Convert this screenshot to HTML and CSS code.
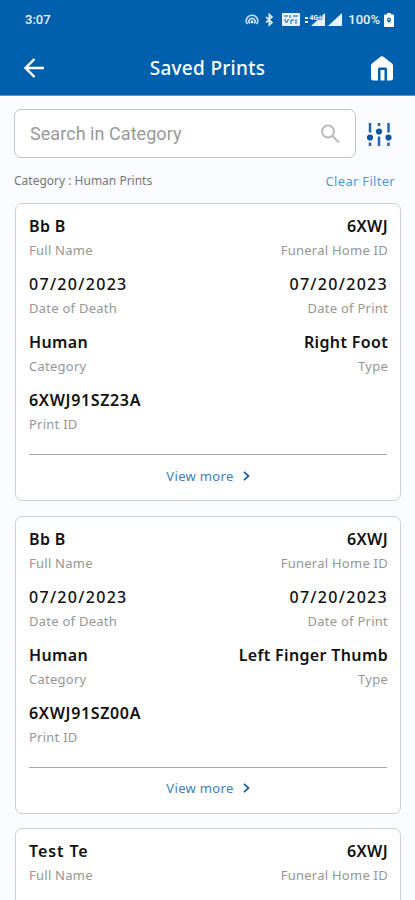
FILE: index.html
```html
<!DOCTYPE html>
<html lang="en">
<head>
    <meta charset="UTF-8">
    <meta name="viewport" content="width=device-width, initial-scale=1.0">
    <link rel="stylesheet" href="styles.css">
    <title>Saved Prints</title>
</head>
<body>

    <header class="header">
        <div class="status-bar">
            <span class="time">3:07</span>
            <svg class="status-icons" width="98" height="16" viewBox="0 0 98 16" fill="#e9f3ff">
                <!-- hotspot -->
                <g fill="none" stroke="#c4dcf5" stroke-width="1.700">
                    <path d="M2.500 12A5.800 5.300 0 1 1 11.500 12"/>
                    <path d="M4.800 11.500A3 3 0 1 1 9.200 11.500"/>
                </g>
                <circle cx="7" cy="10" r="1.400"/>
                <!-- bluetooth -->
                <path d="M21 5L27 10.500L24.300 13V2.500L27 5L21 10.500" fill="none" stroke="#e9f3ff" stroke-width="1.600"/>
                <!-- vpn / volte -->
                <rect x="37" y="1" width="18" height="13" rx="1"/>
                <path d="M39 4H43M45 3V6M48 4H53M39.500 7L41.500 11L43.500 7M46 12V8H49M51 7V12" fill="none" stroke="#0060ad" stroke-width="1"/>
                <!-- signal -->
                <path d="M60 5H63V7H60zM60 9H63V11H60zM66 14L80 1V14z"/>
                <path d="M83 14L97 1V14z"/>
                <text x="64.500" y="7.500" class="network">4G+</text>
            </svg>
            <span class="percent">100%</span>
            <svg class="battery" width="10" height="14" viewBox="0 0 10 14">
                <path d="M3 0H7V1.500H9Q10 1.500 10 2.500V13Q10 14 9 14H1Q0 14 0 13V2.500Q0 1.500 1 1.500H3z" fill="#fff"/>
                <path d="M3 6.500A2 2 0 1 1 7 6.500Q7 8 5 10Q3 8 3 6.500z" fill="#0060ad"/>
                <circle cx="5" cy="6.500" r=".8" fill="#fff"/>
            </svg>
        </div>
        <div class="nav-bar">
            <svg class="back" width="20" height="20" viewBox="0 0 20 20" fill="none" stroke="#fff" stroke-width="2.400">
                <path d="M20 10H2M10.500 1L1.500 10L10.500 19"/>
            </svg>
            <h1>Saved Prints</h1>
            <svg class="home" width="22" height="25" viewBox="0 0 22 25">
                <path d="M9.800.6Q11 0 12.200.6L21 7.500Q22 8.300 22 9.500V22Q22 24.500 19.500 24.500H16V13Q16 11.500 14.500 11.500H8.500Q7 11.500 7 13V24.500H2.500Q0 24.500 0 22V9.500Q0 8.300 1 7.500z" fill="#fff"/>
                <path d="M9.500 14H13.500V24.500H9.500z" fill="#fff"/>
            </svg>
        </div>
    </header>

    <main>
        <div class="search-row">
            <div class="search">
                <span>Search in Category</span>
                <svg width="20" height="20" viewBox="0 0 20 20" fill="none" stroke="#bcbcbc" stroke-width="2">
                    <circle cx="8" cy="7.500" r="6"/>
                    <path d="M12.300 11.800L19 18.500"/>
                </svg>
            </div>
            <svg class="filter" width="26" height="26" viewBox="0 0 26 26" fill="#0b56a5">
                <g fill="none" stroke="#2464ae" stroke-width="2.500">
                    <path d="M4 2V11.500M4 21.500V25M13 2V5M13 15.500V25M22.500 2V11.500M22.500 21.500V25"/>
                </g>
                <circle cx="4" cy="16.500" r="3.100"/>
                <circle cx="13" cy="10.500" r="3.100"/>
                <circle cx="22.500" cy="16.500" r="3.100"/>
            </svg>
        </div>

        <div class="filter-info">
            <span class="current">Category : Human Prints</span>
            <a class="clear">Clear Filter</a>
        </div>

        <div class="card">
            <dl>
                <div><dt>Bb B</dt><dd>Full Name</dd></div>
                <div><dt>6XWJ</dt><dd>Funeral Home ID</dd></div>
                <div><dt class="date">07/20/2023</dt><dd>Date of Death</dd></div>
                <div><dt class="date">07/20/2023</dt><dd>Date of Print</dd></div>
                <div><dt>Human</dt><dd>Category</dd></div>
                <div><dt>Right Foot</dt><dd>Type</dd></div>
                <div><dt class="code">6XWJ91SZ23A</dt><dd>Print ID</dd></div>
            </dl>
            <a class="more">View more
                <svg width="7" height="10" viewBox="0 0 7 10"><path d="M1 .8L5.500 5L1 9.200"/></svg>
            </a>
        </div>

        <div class="card">
            <dl>
                <div><dt>Bb B</dt><dd>Full Name</dd></div>
                <div><dt>6XWJ</dt><dd>Funeral Home ID</dd></div>
                <div><dt class="date">07/20/2023</dt><dd>Date of Death</dd></div>
                <div><dt class="date">07/20/2023</dt><dd>Date of Print</dd></div>
                <div><dt>Human</dt><dd>Category</dd></div>
                <div><dt>Left Finger Thumb</dt><dd>Type</dd></div>
                <div><dt class="code">6XWJ91SZ00A</dt><dd>Print ID</dd></div>
            </dl>
            <a class="more">View more
                <svg width="7" height="10" viewBox="0 0 7 10"><path d="M1 .8L5.500 5L1 9.200"/></svg>
            </a>
        </div>

        <div class="card">
            <dl>
                <div><dt class="wide">Test Te</dt><dd>Full Name</dd></div>
                <div><dt>6XWJ</dt><dd>Funeral Home ID</dd></div>
            </dl>
        </div>
    </main>

</body>
</html>
```
FILE: styles.css
```css
* {
    box-sizing: border-box;
}
body {
    margin: 0;
    height: 900px;
    overflow: hidden;
    background-color: #fafcff;
    font-family: "Noto Sans", sans-serif;
    color: #111;
}
.header {
    height: 96px;
    background-color: #0060ad;
    color: #fff;
    border-bottom: 1px solid #5594c9;
}
.status-bar {
    display: flex;
    align-items: center;
    height: 39px;
    padding: 0 21px 0 25px;
    font-family: Roboto, sans-serif;
    color: #e9f3ff;
}
.time {
    font-size: 13px;
    font-weight: 500;
}
.status-icons {
    margin-left: auto;
}
.network {
    font-size: 7px;
    font-weight: 700;
    stroke: #0060ad;
    stroke-width: 1px;
    paint-order: stroke;
}
.percent {
    margin: 0 4px 0 5px;
    font-size: 13px;
    font-weight: 500;
}
.nav-bar {
    display: flex;
    align-items: center;
    justify-content: space-between;
    height: 58px;
    padding: 0 22px 0 24px;
}
.nav-bar h1 {
    margin: 0;
    font-size: 19px;
    line-height: 26px;
    padding-bottom: 1px;
    font-weight: 500;
    letter-spacing: 0.3px;
}
main {
    height: 804px;
    overflow: hidden;
    padding: 13px 14px 0;
}
.search-row {
    display: flex;
    align-items: center;
    gap: 10px;
}
.search {
    display: flex;
    align-items: center;
    justify-content: space-between;
    width: 342px;
    height: 49px;
    padding: 0 15px;
    border: 1px solid #c2c2c4;
    border-radius: 7px;
    background-color: #fff;
    font-family: Roboto, sans-serif;
    font-size: 18px;
    letter-spacing: 0.05px;
    color: #999;
}
.filter-info {
    display: flex;
    justify-content: space-between;
    align-items: center;
    height: 45px;
    padding: 0 6px 0 0;
}
.current {
    font-size: 12px;
    color: #777;
}
.clear {
    font-size: 13px;
    letter-spacing: 0.3px;
    color: #5a98cb;
}
.card {
    height: 298px;
    margin: 0 0 14.700px 1px;
    width: 386px;
    padding: 11px 13px 0;
    border: 1px solid #cfcfd2;
    border-radius: 7px;
    background-color: #fff;
}
dl {
    display: grid;
    grid-template-columns: auto auto;
    row-gap: 11px;
    margin: 0;
}
dl div:nth-child(even) {
    margin-right: -1px;
    text-align: right;
}
dt {
    font-size: 16px;
    line-height: 22px;
    padding-bottom: 2px;
    font-weight: 600;
    letter-spacing: 0.35px;
}
.date {
    font-weight: 500;
    letter-spacing: 1.300px;
}
.code {
    letter-spacing: 0.650px;
}
.wide {
    letter-spacing: 0.900px;
}
dd {
    margin: 0;
    font-size: 13px;
    line-height: 23px;
    letter-spacing: 0.25px;
    color: #969696;
}
.more {
    display: flex;
    align-items: center;
    justify-content: center;
    gap: 9px;
    height: 42px;
    margin-top: 18px;
    border-top: 1px solid #a9a9a9;
    font-size: 13px;
    letter-spacing: 0.35px;
    color: #3e7dba;
}
.more svg {
    fill: none;
    stroke: #1763ad;
    stroke-width: 1.800;
}
```
